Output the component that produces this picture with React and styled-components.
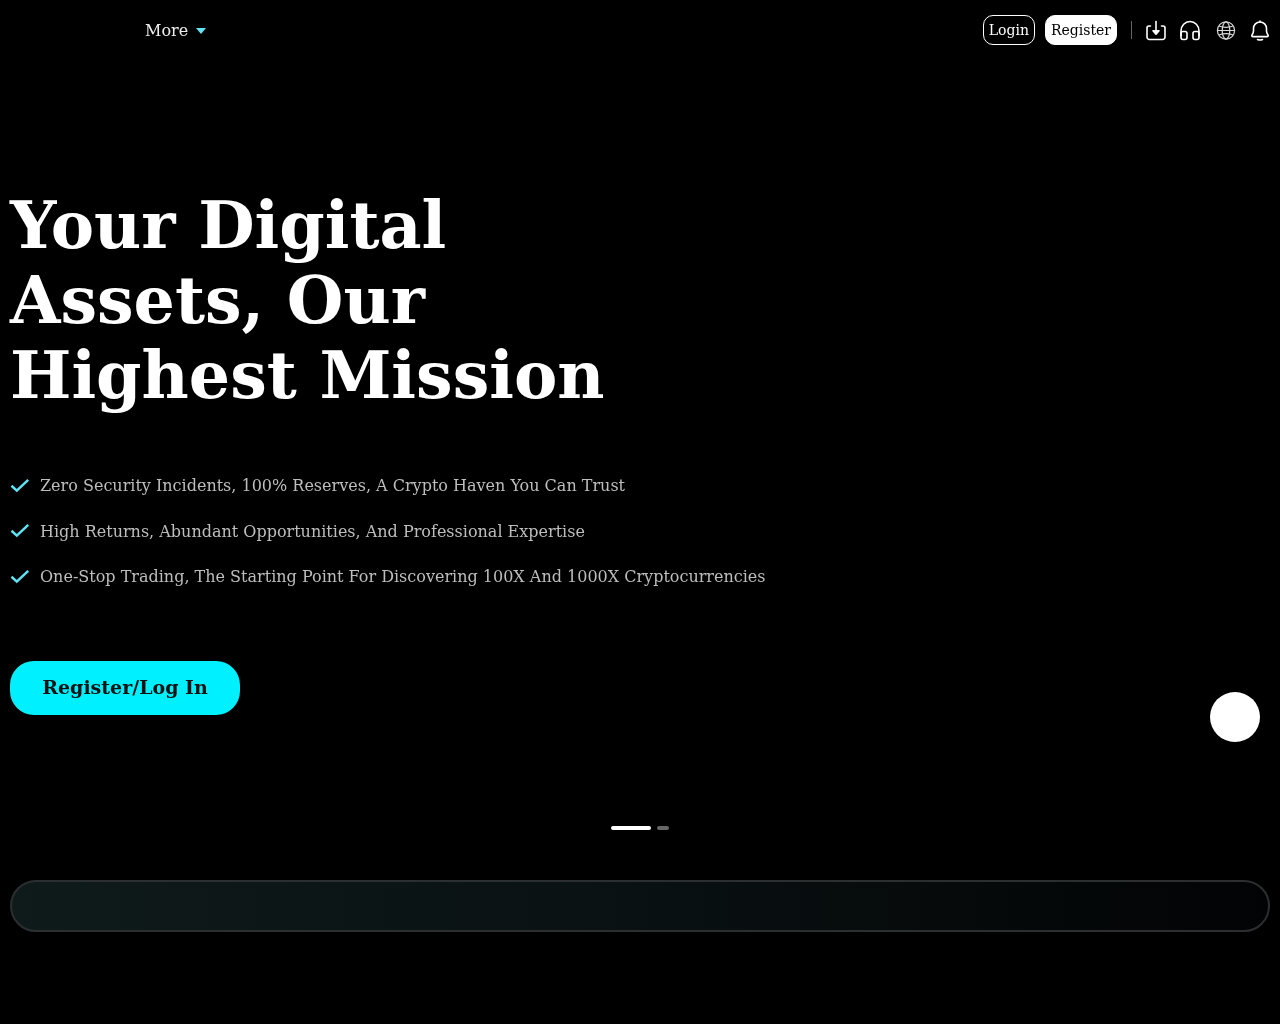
import React from 'react';
import styled, { createGlobalStyle } from 'styled-components';

const GlobalStyle = createGlobalStyle`
  html, body {
    margin: 0;
    padding: 0;
    background: #000;
    font-family: "DejaVu Serif", serif;
  }
`;

const Page = styled.div`
  position: relative;
  height: 1024px;
  overflow: hidden;
  background: #000;
  color: #fff;
`;

const Header = styled.header`
  display: flex;
  align-items: center;
  justify-content: space-between;
  height: 60px;
  padding: 0 8px 0 145px;
  will-change: transform;
`;

const MoreMenu = styled.div`
  display: flex;
  align-items: center;
  gap: 8px;
  font-size: 16px;
  color: #eee;
`;

const Caret = styled.span`
  width: 0;
  height: 0;
  margin-top: 2px;
  border-left: 5px solid transparent;
  border-right: 5px solid transparent;
  border-top: 6px solid #5fe3f5;
`;

const Actions = styled.div`
  display: flex;
  align-items: center;
`;

const HeaderButton = styled.button`
  box-sizing: border-box;
  height: 30px;
  padding: 0 5px;
  margin-right: 10px;
  border: 1px solid #fff;
  border-radius: 10px;
  background: ${(p) => (p.$solid ? '#fff' : 'transparent')};
  color: ${(p) => (p.$solid ? '#000' : '#fff')};
  font-family: inherit;
  font-size: 14px;
`;

const Divider = styled.span`
  width: 1px;
  height: 18px;
  margin: 0 12px 0 4px;
  background: #666;
`;

const IconSlot = styled.span`
  display: flex;
  width: 24px;
  height: 24px;
  margin-left: ${(p) => p.$gap || 0}px;
  color: #fff;
`;

const Hero = styled.section`
  padding: 127.6px 10px 0;
  will-change: transform;
`;

const Title = styled.h1`
  width: 640px;
  margin: 0;
  font-size: 65px;
  font-weight: 700;
  line-height: 75.4px;
`;

const Points = styled.ul`
  display: flex;
  flex-direction: column;
  gap: 21px;
  margin: 59.4px 0 0;
  padding: 0;
  list-style: none;
`;

const Point = styled.li`
  display: flex;
  align-items: center;
  gap: 10px;
  height: 24.6px;
  font-size: 16px;
  color: #bdbdbd;
`;

const Cta = styled.button`
  display: block;
  width: 230px;
  height: 54px;
  margin-top: 72px;
  padding: 0 0 2px;
  border: none;
  border-radius: 24px;
  background: #00f0ff;
  color: #111;
  font-family: inherit;
  font-size: 19px;
  font-weight: 700;
`;

const Dots = styled.div`
  display: flex;
  justify-content: center;
  gap: 6px;
  margin-top: 111px;
`;

const Dot = styled.span`
  width: ${(p) => (p.$active ? 40 : 12)}px;
  height: 4px;
  border-radius: 2px;
  background: ${(p) => (p.$active ? '#fff' : '#666')};
`;

const Ticker = styled.div`
  box-sizing: border-box;
  height: 52px;
  margin: 50px 10px 0;
  border: 2px solid #2b2f2f;
  border-radius: 26px;
  background: linear-gradient(90deg, #0f1a1b 0%, #0a1213 45%, #020304 100%);
`;

const FloatButton = styled.div`
  position: absolute;
  top: 692px;
  right: 20px;
  width: 50px;
  height: 50px;
  border-radius: 50%;
  background: #fff;
`;

const Check = () => (
  <svg width="20" height="20" viewBox="0 0 20 20" fill="none" stroke="#5fe3f5" strokeWidth="2.5">
    <path d="M1.5 9.8 L6.8 14.6 L18.2 3.8" />
  </svg>
);

const DownloadIcon = () => (
  <svg width="24" height="24" viewBox="0 0 24 24" fill="none" stroke="currentColor" strokeWidth="1.6" strokeLinecap="round" strokeLinejoin="round">
    <path d="M6.5 8 H5 a2 2 0 0 0 -2 2 V19 a2.5 2.5 0 0 0 2.5 2.5 H18.5 a2.5 2.5 0 0 0 2.5 -2.5 V10 a2 2 0 0 0 -2 -2 H17.5" />
    <path d="M12 3.5 V13" />
    <path d="M9 12.8 H15 L12 16.2 Z" fill="currentColor" />
  </svg>
);

const HeadsetIcon = () => (
  <svg width="24" height="24" viewBox="0 0 24 24" fill="none" stroke="currentColor" strokeWidth="1.6" strokeLinecap="round" strokeLinejoin="round">
    <path d="M3 18 V13 a9 9.5 0 0 1 18 0 V18" />
    <rect x="3" y="13.5" width="6" height="8" rx="2" />
    <rect x="15" y="13.5" width="6" height="8" rx="2" />
  </svg>
);

const GlobeIcon = () => (
  <svg width="24" height="24" viewBox="0 0 24 24" fill="none" stroke="#d8d8d8" strokeWidth="1.2">
    <circle cx="12" cy="12.5" r="8.6" />
    <ellipse cx="12" cy="12.5" rx="3.8" ry="8.6" />
    <path d="M4.8 8 Q12 10.6 19.2 8 M3.4 12.5 H20.6 M4.8 17 Q12 14.4 19.2 17" />
  </svg>
);

const BellIcon = () => (
  <svg width="24" height="24" viewBox="0 0 24 24" fill="none" stroke="currentColor" strokeWidth="1.6" strokeLinecap="round" strokeLinejoin="round">
    <path d="M12 4 a6.5 6.5 0 0 0 -6.5 6.5 V13 C5.5 15 4.6 16.3 3.9 17.3 Q3.4 18.6 5 18.6 H19 Q20.6 18.6 20.1 17.3 C19.4 16.3 18.5 15 18.5 13 V10.5 a6.5 6.5 0 0 0 -6.5 -6.5 Z" />
    <path d="M12 3 V4" />
    <path d="M9.5 21.5 Q12 22.5 14.5 21.5" />
  </svg>
);

const points = [
  'Zero Security Incidents, 100% Reserves, A Crypto Haven You Can Trust',
  'High Returns, Abundant Opportunities, And Professional Expertise',
  'One-Stop Trading, The Starting Point For Discovering 100X And 1000X Cryptocurrencies',
];

export default function App() {
  return (
    <Page>
      <GlobalStyle />
      <Header>
        <MoreMenu>
          More
          <Caret />
        </MoreMenu>
        <Actions>
          <HeaderButton>Login</HeaderButton>
          <HeaderButton $solid>Register</HeaderButton>
          <Divider />
          <IconSlot><DownloadIcon /></IconSlot>
          <IconSlot $gap={10}><HeadsetIcon /></IconSlot>
          <IconSlot $gap={12}><GlobeIcon /></IconSlot>
          <IconSlot $gap={10}><BellIcon /></IconSlot>
        </Actions>
      </Header>
      <Hero>
        <Title>Your Digital Assets, Our Highest Mission</Title>
        <Points>
          {points.map((text) => (
            <Point key={text}>
              <Check />
              {text}
            </Point>
          ))}
        </Points>
        <Cta>Register/Log In</Cta>
      </Hero>
      <Dots>
        <Dot $active />
        <Dot />
      </Dots>
      <Ticker />
      <FloatButton />
    </Page>
  );
}
